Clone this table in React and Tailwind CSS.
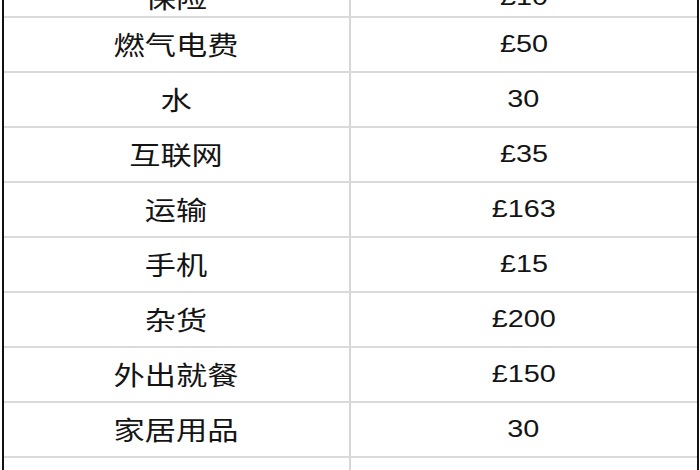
const rows = [
  ["保险", "£10"],
  ["燃气电费", "£50"],
  ["水", "30"],
  ["互联网", "£35"],
  ["运输", "£163"],
  ["手机", "£15"],
  ["杂货", "£200"],
  ["外出就餐", "£150"],
  ["家居用品", "30"],
  ["个人护理", "£40"],
];

const cjk = {
  fontFamily: '"Noto Sans CJK SC", "Noto Sans", sans-serif',
};
const num = {
  fontFamily: '"Liberation Sans", Arial, sans-serif',
};

function Row({ label, value, first }) {
  return (
    <div className="grid grid-cols-2 h-[55px] border-b-2 border-[#dadada]">
      <div
        className={`flex items-center justify-center border-r-2 border-[#d6d6d6] ${first ? "pt-[14px]" : "pb-[2px]"}`}
      >
        <span
          className="inline-block scale-x-[1.2] text-[26px] leading-none text-[#141414]"
          style={cjk}
        >
          {label}
        </span>
      </div>
      <div
        className={`flex items-center justify-center ${first ? "pt-[14px]" : "pb-[2px]"}`}
      >
        <span
          className="inline-block scale-x-[1.2] text-[24px] leading-none text-[#141414]"
          style={num}
        >
          {value}
        </span>
      </div>
    </div>
  );
}

export default function App() {
  return (
    <div className="w-[700px] h-[470px] overflow-hidden bg-white">
      <div className="ml-[2px] mr-[1px] h-[470px] overflow-hidden border-x-2 border-[#111]">
        <div className="-mt-[37px]">
          {rows.map(([label, value], i) => (
            <Row key={label} label={label} value={value} first={i === 0} />
          ))}
        </div>
      </div>
    </div>
  );
}
